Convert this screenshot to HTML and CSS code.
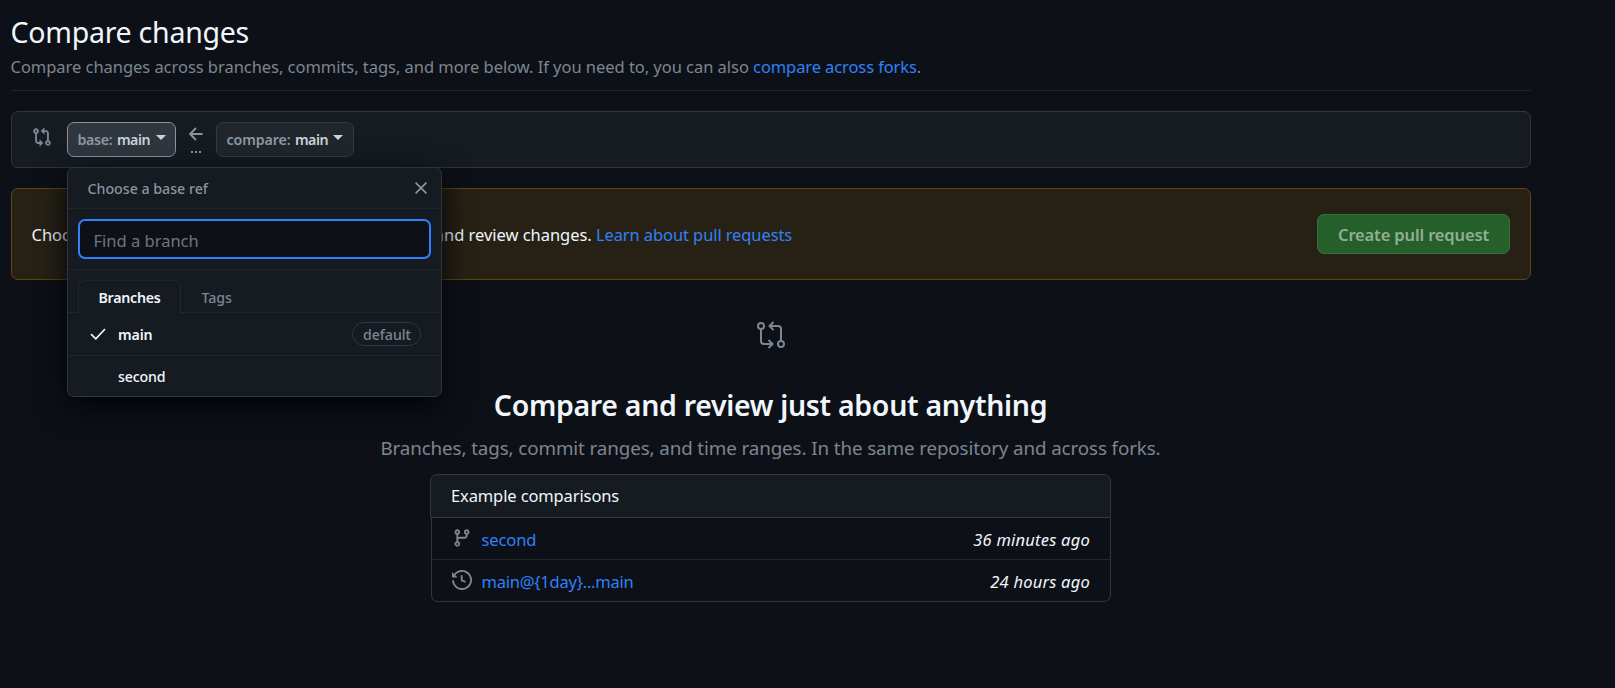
FILE: index.html
```html
<!DOCTYPE html>
<html lang="en">
<head>
<meta charset="utf-8">
<title>Compare changes</title>
<link rel="stylesheet" href="styles.css">
</head>
<body>
<main class="page">
  <header class="head">
    <h1 class="title">Compare changes</h1>
    <p class="subtitle">Compare changes across branches, commits, tags, and more below. If you need to, you can also <a class="link" href="#">compare across forks</a>.</p>
  </header>

  <section class="range">
    <svg class="range-icon" viewBox="0 0 16 16" width="20" height="20"><path d="M9.573.677A.25.25 0 0 1 10 .854V2.500h1A2.500 2.500 0 0 1 13.500 5v5.628a2.251 2.251 0 1 1-1.500 0V5a1 1 0 0 0-1-1h-1v1.646a.25.25 0 0 1-.427.177L7.177 3.427a.25.25 0 0 1 0-.354ZM6 12v-1.646a.25.25 0 0 1 .427-.177l2.396 2.396a.25.25 0 0 1 0 .354l-2.396 2.396A.25.25 0 0 1 6 15.146V13.500H5A2.500 2.500 0 0 1 2.500 11V5.372a2.250 2.250 0 1 1 1.500 0V11a1 1 0 0 0 1 1ZM4 3.250a.75.75 0 1 0-1.500 0 .75.75 0 0 0 1.500 0ZM12.750 12a.75.75 0 1 0 0 1.500.75.75 0 0 0 0-1.500Z"/></svg>
    <div class="picker">
      <button class="btn btn-open"><span class="muted muted-base">base:</span><span class="ref">main</span><i class="caret"></i></button>
      <div class="menu">
        <div class="menu-head">Choose a base ref
          <svg class="close" viewBox="0 0 12 12" width="12" height="12"><path d="M.6.6l10.800 10.800M11.400.6L.6 11.400"/></svg>
        </div>
        <div class="menu-filter"><div class="field">Find a branch</div></div>
        <div class="tabs"><div class="tab tab-on">Branches</div><div class="tab">Tags</div></div>
        <div class="item item-on">
          <svg class="check" viewBox="0 0 16 12" width="16" height="12"><path d="M1 6.200l4.800 4.600L15 1"/></svg>
          <span class="item-name">main</span><span class="pill">default</span>
        </div>
        <div class="item"><span class="item-name">second</span></div>
      </div>
    </div>
    <div class="arrow">
      <svg viewBox="0 0 14 14" width="14" height="14"><path d="M13.500 7H1M7 1L1 7l6 6"/></svg>
      <div class="dots"><i></i><i></i><i></i></div>
    </div>
    <button class="btn"><span class="muted">compare:</span><span class="ref">main</span><i class="caret"></i></button>
  </section>

  <section class="notice">
    <p class="notice-text">Choose different branches or forks above to discuss and review changes. <a class="link" href="#">Learn about pull requests</a></p>
    <button class="create">Create pull request</button>
  </section>

  <section class="blank">
    <svg class="blank-icon" viewBox="0 0 28 26" width="28" height="26"><circle cx="4" cy="4" r="3"/><circle cx="24" cy="22" r="3"/><path d="M4 7v12a3 3 0 0 0 3 3h8.500M11.500 18l4 4-4 4M24 19V7a3 3 0 0 0-3-3h-8.500M16.500 0l-4 4 4 4"/></svg>
    <h2 class="blank-title">Compare and review just about anything</h2>
    <p class="blank-text">Branches, tags, commit ranges, and time ranges. In the same repository and across forks.</p>
    <div class="box">
      <div class="box-head">Example comparisons</div>
      <div class="box-rows">
        <div class="row">
          <svg class="row-icon" viewBox="0 0 16 16" width="20" height="20"><path d="M9.500 3.250a2.250 2.250 0 1 1 3 2.122V6A2.500 2.500 0 0 1 10 8.500H6a1 1 0 0 0-1 1v1.128a2.251 2.251 0 1 1-1.500 0V5.372a2.250 2.250 0 1 1 1.500 0v1.836A2.493 2.493 0 0 1 6 7h4a1 1 0 0 0 1-1v-.628A2.250 2.250 0 0 1 9.500 3.250Zm-6 0a.75.75 0 1 0 1.500 0 .75.75 0 0 0-1.500 0Zm8.250-.75a.75.75 0 1 0 0 1.500.75.75 0 0 0 0-1.500ZM4.250 12a.75.75 0 1 0 0 1.500.75.75 0 0 0 0-1.500Z"/></svg>
          <a class="link" href="#">second</a><em class="when">36 minutes ago</em>
        </div>
        <div class="row">
          <svg class="row-icon" viewBox="0 0 16 16" width="20" height="20"><path d="m.427 1.927 1.215 1.215a8.002 8.002 0 1 1-1.600 5.685.75.75 0 1 1 1.493-.154 6.500 6.500 0 1 0 1.180-4.458l1.358 1.358A.25.25 0 0 1 3.896 6H.25A.25.25 0 0 1 0 5.750V2.104a.25.25 0 0 1 .427-.177ZM7.750 4a.75.75 0 0 1 .75.75v2.992l2.028.812a.75.75 0 0 1-.557 1.392l-2.500-1A.751.751 0 0 1 7 8.250v-3.500A.75.75 0 0 1 7.750 4Z"/></svg>
          <a class="link link-range" href="#">main@{1day}...main</a><em class="when">24 hours ago</em>
        </div>
      </div>
    </div>
  </section>
</main>
</body>
</html>
```
FILE: styles.css
```css
* { box-sizing: border-box; }
body {
  margin: 0;
  background: #0d1117;
  color: #f0f6fc;
  font-family: "Noto Sans", "Open Sans", sans-serif;
  font-size: 16.5px;
}
h1, h2, p { margin: 0; }
button { font-family: inherit; margin: 0; }
svg { display: block; flex: none; }
.page { width: 1531px; height: 688px; padding: 12px 0 0 11px; }
.link { color: #2f81f7; text-decoration: none; letter-spacing: -0.1px; }
.link-range { letter-spacing: -0.23px; }

.head { border-bottom: 1px solid #21262d; padding-bottom: 10px; }
.title { margin-left: -0.5px; font-size: 28.5px; font-weight: 400; line-height: 40px; letter-spacing: -0.25px; }
.subtitle { margin: 2px 0 0 -0.5px; line-height: 26px; color: #7d8590; white-space: nowrap; letter-spacing: -0.04px; }

.range {
  display: flex;
  align-items: flex-start;
  height: 57px;
  margin-top: 20px;
  padding: 10px 20px;
  background: #161b22;
  border: 1px solid #30363d;
  border-radius: 7px;
}
.range-icon { margin: 5px 15px 0 0; fill: #7d8590; }
.picker { position: relative; }
.btn {
  display: flex;
  align-items: center;
  height: 35px;
  padding: 0 9.5px;
  background: #21262d;
  border: 1px solid #363b42;
  border-radius: 7px;
  color: #c9d1d9;
  font-size: 14.2px;
  font-weight: 600;
}
.btn-open { background: #30363d; border-color: #8b949e; }
.muted { margin-right: 4.5px; color: #8f98a1; letter-spacing: -0.1px; }
.muted-base { letter-spacing: -0.28px; }
.ref { letter-spacing: -0.5px; }
.caret { margin: -4px 0 0 5.5px; border: 5px solid transparent; border-top-color: #c9d1d9; border-bottom: 0; }
.arrow { display: flex; flex-direction: column; align-items: center; width: 40px; padding-top: 5px; }
.arrow svg { fill: none; stroke: #8b949e; stroke-width: 1.8; }
.dots { display: flex; gap: 2px; margin-top: 10px; }
.dots i { width: 2px; height: 2px; background: #8b949e; }

.menu {
  position: absolute;
  left: 0;
  top: 45px;
  z-index: 2;
  width: 375px;
  height: 230px;
  background: #161b22;
  border: 1px solid #30363d;
  border-radius: 7px;
  box-shadow: 0 10px 30px #010409;
  font-size: 14.2px;
}
.menu-head {
  display: flex;
  align-items: center;
  justify-content: space-between;
  height: 41px;
  padding: 0 14px 0 19.5px;
  border-bottom: 1px solid #21262d;
  color: #8b949e;
  font-weight: 500;
}
.close { fill: none; stroke: #8b949e; stroke-width: 1.7; }
.menu-filter { height: 61px; padding: 10px; border-bottom: 1px solid #21262d; }
.field {
  height: 40px;
  padding: 0 13.5px;
  background: #0d1117;
  border: 2px solid #2f81f7;
  border-radius: 7px;
  color: #6e7681;
  font-size: 16.5px;
  line-height: 39px;
}
.tabs { display: flex; height: 43px; padding: 10px 10px 0; border-bottom: 1px solid #21262d; }
.tab { height: 33px; padding: 0 19.5px; line-height: 34px; color: #7d8590; font-weight: 500; border: 1px solid transparent; letter-spacing: -0.1px; }
.tab-on { color: #f0f6fc; font-weight: 600; background: #161b22; border-color: #21262d; border-bottom: 0; border-radius: 7px 7px 0 0; letter-spacing: -0.25px; }
.item { display: flex; align-items: center; height: 40px; padding: 0 20px 0 50px; font-weight: 500; letter-spacing: -0.14px; }
.item-on { height: 43px; padding-left: 22px; border-bottom: 1px solid #21262d; }
.item-on .item-name { font-weight: 600; }
.check { margin-right: 12px; fill: none; stroke: #f0f6fc; stroke-width: 1.7; }
.pill { margin-left: auto; height: 24px; padding: 0 9px 0 9.5px; line-height: 23px; border: 1px solid #30363d; border-radius: 12px; color: #7d8590; letter-spacing: -0.03px; }

.notice {
  display: flex;
  align-items: center;
  height: 92px;
  margin-top: 20px;
  padding: 0 20px;
  background: #272115;
  border: 1px solid #634411;
  border-radius: 7px;
}
.notice-text { flex: 1; margin-left: -0.5px; white-space: nowrap; letter-spacing: -0.04px; }
.create {
  width: 193px;
  height: 40px;
  padding: 1px 0 0;
  background: #255f2a;
  border: 1px solid #36713c;
  border-radius: 7px;
  color: #92af94;
  font-size: 16.5px;
  font-weight: 600;
  letter-spacing: -0.14px;
}

.blank { display: flex; flex-direction: column; align-items: center; padding-top: 42px; }
.blank-icon { fill: none; stroke: #7d8590; stroke-width: 2; overflow: visible; }
.blank-title { margin: 37px 1px 0 0; font-size: 28.5px; font-weight: 600; line-height: 40px; white-space: nowrap; letter-spacing: -0.31px; }
.blank-text { margin: 8px 1px 0 0; color: #7d8590; font-size: 18.8px; line-height: 30px; white-space: nowrap; letter-spacing: -0.11px; }
.box { width: 681px; margin: 11px 1px 0 0; }
.box-head { height: 44px; padding: 0 20px; line-height: 42px; background: #161b22; border: 1px solid #30363d; border-radius: 7px 7px 0 0; letter-spacing: -0.12px; }
.box-rows { margin-left: 1px; border: 1px solid #30363d; border-top: 0; border-radius: 0 0 7px 7px; }
.row { display: flex; align-items: center; height: 41px; padding: 1px 20px 0; }
.row + .row { height: 42px; border-top: 1px solid #21262d; }
.row-icon { margin: -3px 9.5px 0 0; fill: #7d8590; }
.when { margin-left: auto; letter-spacing: 0.22px; }
```
